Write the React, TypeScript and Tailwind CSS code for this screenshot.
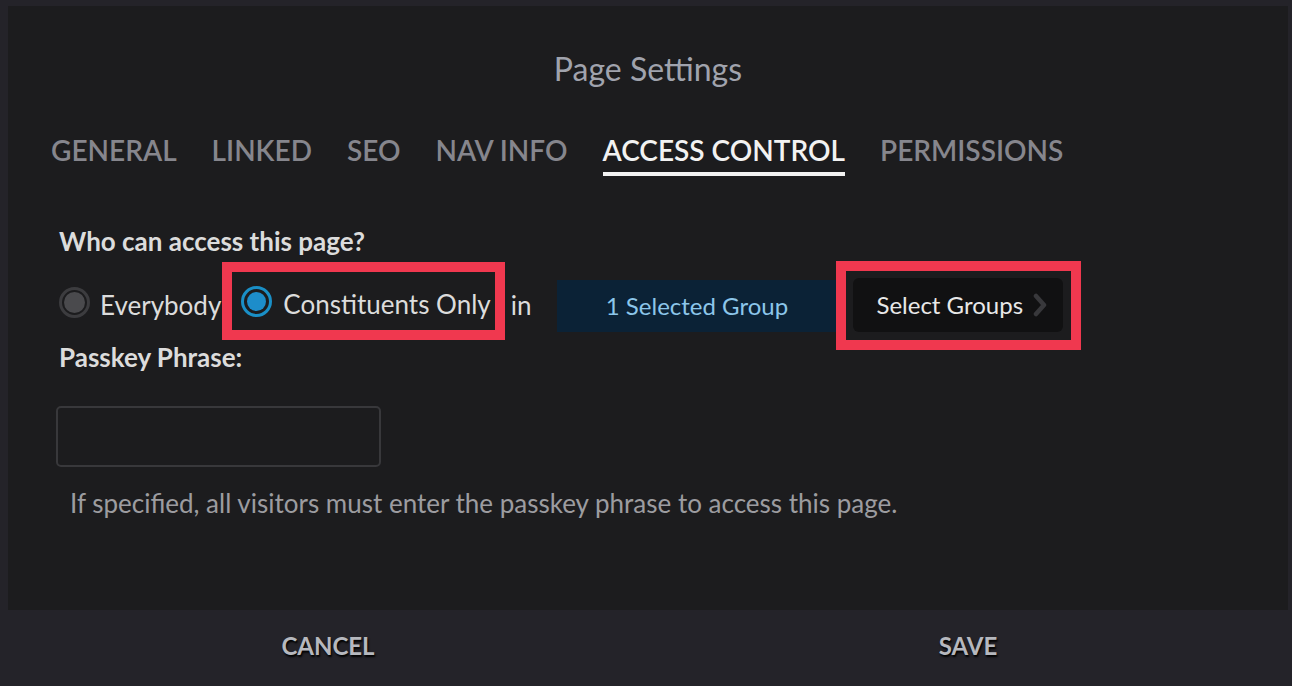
const tabs = ["GENERAL", "LINKED", "SEO", "NAV INFO", "ACCESS CONTROL", "PERMISSIONS"];

function Radio({ checked }: { checked?: boolean }) {
  if (checked) {
    return (
      <span className="w-[31px] h-[31px] rounded-full border-[3px] border-[#1a8fc6] flex items-center justify-center shrink-0">
        <span className="w-[19px] h-[19px] rounded-full bg-[#1d8dca]" />
      </span>
    );
  }
  return (
    <span className="w-[31px] h-[31px] rounded-full border-[3px] border-[#3c3c3f] flex items-center justify-center shrink-0">
      <span className="w-[21px] h-[21px] rounded-full bg-[#4a4a4d]" />
    </span>
  );
}

export default function App() {
  const active = "ACCESS CONTROL";

  return (
    <div
      className="w-full h-[686px] bg-[#242329] flex flex-col overflow-hidden"
      style={{ fontFamily: "Lato, 'Noto Sans', sans-serif" }}
    >
      <div className="ml-2 mr-1 mt-[6px] h-[604px] bg-[#1c1c1e] flex flex-col">
        <h1 className="pt-[44px] text-center text-[32px] leading-[38px] text-[#a0a3ad]">
          Page Settings
        </h1>

        <div className="mt-[45px] pl-[43px] flex gap-[35px]">
          {tabs.map((tab) => (
            <div
              key={tab}
              className={`text-[28px] leading-[34px] font-semibold pb-[5px] border-b-4 ${
                tab === active ? "text-[#f2f2f2] border-[#f2f2f2]" : "text-[#86868d] border-transparent"
              }`}
            >
              {tab}
            </div>
          ))}
        </div>

        <div className="pl-[51px] mt-[49px]">
          <p className="text-[26px] leading-[32px] font-bold text-[#dcdcdc]">
            Who can access this page?
          </p>

          <div className="mt-[4px] flex items-center text-[26px] text-[#dcdcdc] h-[89px]">
            <span className="mb-[6px]">
              <Radio />
            </span>
            <span className="ml-[10px]">Everybody</span>

            <div className="ml-[1px] mb-[9px] h-[78px] border-[10px] border-[#f0384f] flex items-center pl-[9px] pr-[4px]">
              <Radio checked />
              <span className="ml-[11px] mt-[6px]">Constituents Only</span>
            </div>

            <span className="ml-[6px]">in</span>

            <div className="ml-[26px] w-[279px] h-[52px] bg-[#0b2236] text-[24px] text-[#8cc6ea] flex items-center justify-center">
              1 Selected Group
            </div>

            <div className="h-[89px] w-[245px] border-[10px] border-[#f0384f] pl-[7px] pr-[8px] pt-[7px]">
              <button className="w-full h-[54px] rounded-[6px] bg-[#111112] text-[24px] text-[#e8e8e8] flex items-center pl-[23px]">
                <span>Select Groups</span>
                <svg width="14" height="24" viewBox="0 0 14 24" className="ml-[10px]">
                  <polyline
                    points="3,3 11,12 3,21"
                    fill="none"
                    stroke="#38383b"
                    strokeWidth="4.5"
                    strokeLinecap="round"
                    strokeLinejoin="round"
                  />
                </svg>
              </button>
            </div>
          </div>

          <p className="-mt-[9px] text-[26px] leading-[32px] font-bold text-[#dcdcdc]">
            Passkey Phrase:
          </p>

          <input
            className="mt-[33px] -ml-[3px] block w-[325px] h-[61px] rounded-[5px] border-2 border-[#38383b] bg-transparent outline-none"
            type="text"
          />

          <p className="mt-[20px] ml-[11px] text-[26px] leading-[32px] text-[#9c9ca0]">
            If specified, all visitors must enter the passkey phrase to access this page.
          </p>
        </div>
      </div>

      <div className="flex-1 ml-2 mr-1 flex">
        <button
          className="flex-1 text-[24px] font-bold text-[#b6b8be] pb-[4px]"
          style={{ textShadow: "1px 2px 2px #000" }}
        >
          CANCEL
        </button>
        <button
          className="flex-1 text-[24px] font-bold text-[#b6b8be] pb-[4px]"
          style={{ textShadow: "1px 2px 2px #000" }}
        >
          SAVE
        </button>
      </div>
    </div>
  );
}
